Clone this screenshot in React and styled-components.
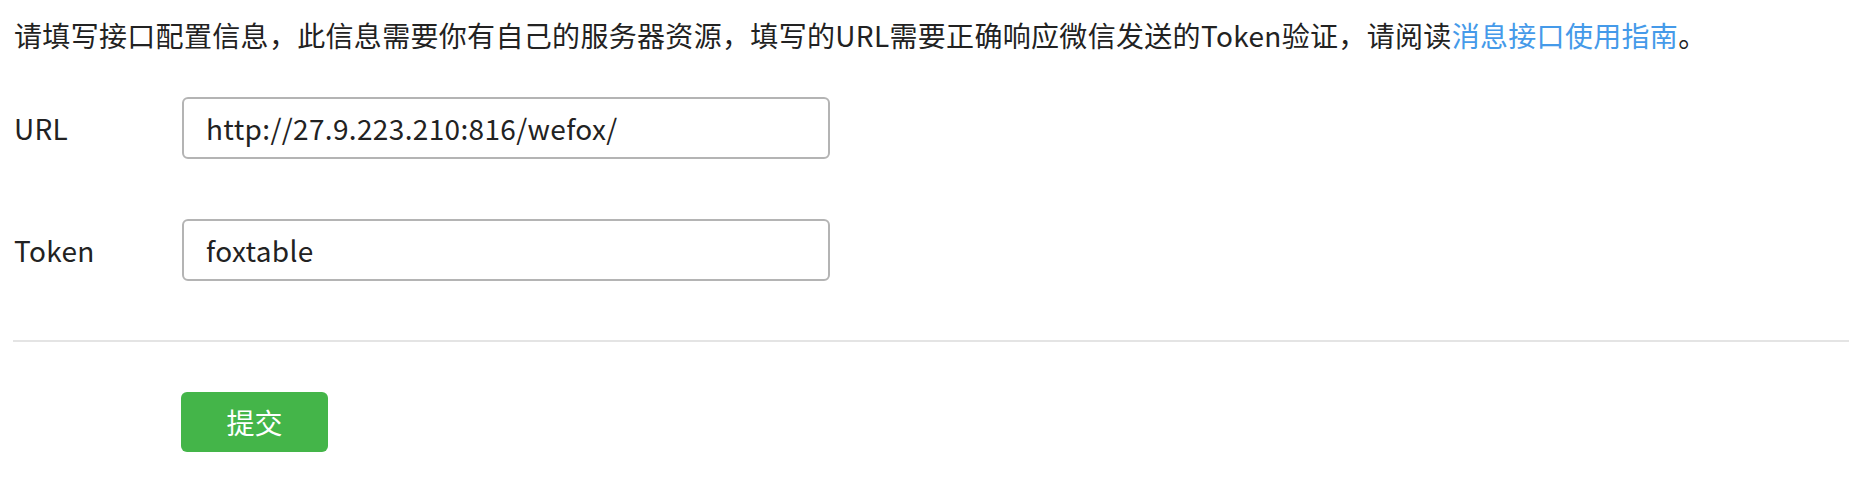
import React from "react";
import styled, { createGlobalStyle } from "styled-components";

const Global = createGlobalStyle`
  html, body { margin: 0; padding: 0; background: #fff; }
  body {
    font-family: "Noto Sans CJK SC", "Noto Sans", sans-serif;
    color: #222;
  }
`;

const Page = styled.div`
  padding: 15px 0 0 13px;
`;

const Intro = styled.p`
  margin: 0 0 42px 1px;
  font-size: 28px;
  line-height: 40px;
  letter-spacing: 0.32px;
  color: #222;
  white-space: nowrap;
`;

const Link = styled.a`
  color: #459ae9;
  text-decoration: none;
`;

const Form = styled.div`
  display: flex;
  flex-direction: column;
  gap: 60px;
`;

const Row = styled.div`
  display: flex;
  align-items: center;
`;

const Label = styled.label`
  width: 169px;
  padding-left: 1px;
  box-sizing: border-box;
  font-size: 28px;
  letter-spacing: 0.3px;
  color: #222;
`;

const Input = styled.input`
  box-sizing: border-box;
  width: 648px;
  height: 62px;
  padding: 0 22px;
  border: 2px solid #b4b4b4;
  border-radius: 6px;
  font-family: "Noto Sans CJK SC", "Noto Sans", sans-serif;
  font-size: 28px;
  letter-spacing: 0.35px;
  color: #222;
  background: #fff;
  outline: none;
`;

const Divider = styled.hr`
  margin: 59px 0 50px 0;
  border: none;
  height: 2px;
  background: #e4e4e4;
`;

const Actions = styled.div`
  padding-left: 168px;
`;

const Button = styled.button`
  width: 147px;
  height: 60px;
  border: none;
  border-radius: 6px;
  background: #44b549;
  color: #fff;
  font-family: "Noto Sans CJK SC", "Noto Sans", sans-serif;
  font-size: 28px;
  cursor: pointer;
`;

export default function App() {
  return (
    <Page>
      <Global />
      <Intro>
        请填写接口配置信息，此信息需要你有自己的服务器资源，填写的URL需要正确响应微信发送的Token验证，请阅读
        <Link href="#">消息接口使用指南</Link>。
      </Intro>
      <Form>
        <Row>
          <Label>URL</Label>
          <Input defaultValue="http://27.9.223.210:816/wefox/" />
        </Row>
        <Row>
          <Label>Token</Label>
          <Input defaultValue="foxtable" />
        </Row>
      </Form>
      <Divider />
      <Actions>
        <Button>提交</Button>
      </Actions>
    </Page>
  );
}
